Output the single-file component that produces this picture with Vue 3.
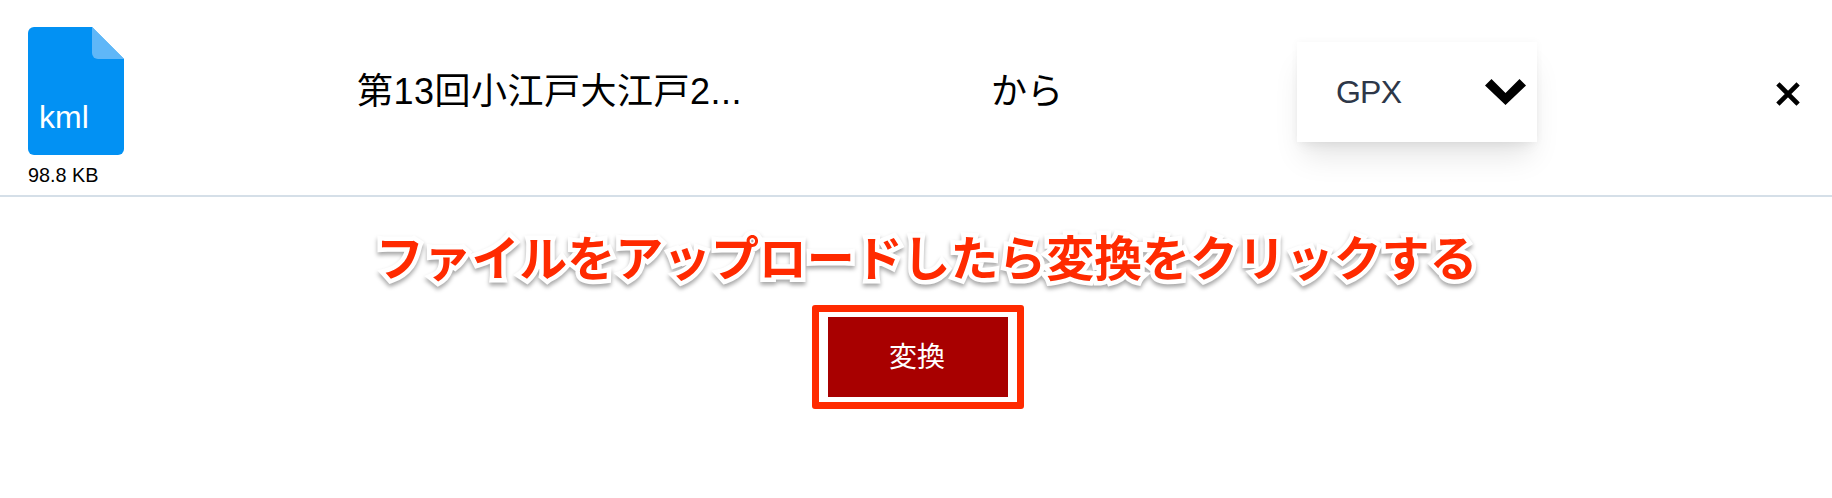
<script setup>
const fileName = '第13回小江戸大江戸2...'
</script>

<template>
  <div class="page">
    <div class="row">
      <div class="file">
        <svg class="file-icon" viewBox="0 0 96 128" width="96" height="128">
          <path d="M6 0H64L96 32V122a6 6 0 0 1-6 6H6a6 6 0 0 1-6-6V6a6 6 0 0 1 6-6Z" fill="#0291f3" />
          <path d="M64 0L96 32H70a6 6 0 0 1-6-6Z" fill="#5fb7f8" />
        </svg>
        <span class="ext">kml</span>
        <div class="size">98.8 KB</div>
      </div>
      <div class="name">{{ fileName }}</div>
      <div class="from">から</div>
      <div class="select">
        <span class="select-label">GPX</span>
        <svg class="chevron" viewBox="0 0 41 26" width="41" height="26">
          <path d="M0 6.5L6.5 0L20.5 14L34.5 0L41 6.5L20.5 26Z" fill="#000" />
        </svg>
      </div>
      <svg class="close" viewBox="0 0 24 24" width="24" height="24">
        <path d="M3.5 3.5L20.5 20.5M20.5 3.5L3.5 20.5" stroke="#000" stroke-width="4.6" fill="none" stroke-linecap="square" />
      </svg>
    </div>
    <div class="note">ファイルをアップロードしたら変換をクリックする</div>
    <div class="action">
      <div class="mark">
        <button class="convert" type="button">変換</button>
      </div>
    </div>
  </div>
</template>

<style scoped>
.page {
  width: 1832px;
  height: 498px;
  background: #fff;
  overflow: hidden;
  font-family: "Liberation Sans", "Noto Sans CJK JP", sans-serif;
  color: #000;
}
.row {
  box-sizing: border-box;
  height: 197px;
  border-bottom: 2px solid #d5dfe8;
  display: grid;
  grid-template-columns: 329px 634px 306px 240px 1fr;
  padding-left: 28px;
  padding-bottom: 14px;
  align-items: center;
}
.file {
  position: relative;
  align-self: start;
  padding-top: 27px;
}
.file-icon {
  display: block;
}
.ext {
  position: absolute;
  left: 11px;
  top: 99px;
  font-size: 32px;
  line-height: 36px;
  color: #fff;
}
.size {
  margin-top: 9px;
  font-size: 19.8px;
  line-height: 22px;
}
.name,
.from {
  font-size: 36px;
  line-height: 44px;
  white-space: nowrap;
  margin-top: -2px;
}
.name {
  letter-spacing: 0.5px;
}
.select {
  box-sizing: border-box;
  width: 240px;
  height: 100px;
  margin-top: -2px;
  background: #fff;
  box-shadow: 0 0 8px rgba(0, 0, 0, 0.04), 0 20px 30px -6px rgba(0, 0, 0, 0.1), 0 8px 12px -4px rgba(0, 0, 0, 0.05);
  display: flex;
  align-items: center;
  justify-content: space-between;
  padding: 0 11px 0 39px;
}
.select-label {
  font-size: 32px;
  letter-spacing: -0.8px;
  color: #2d3748;
}
.chevron {
  display: block;
}
.close {
  margin-left: 239px;
  margin-top: 2px;
}
.note {
  padding-left: 21px;
  margin-top: 32px;
  text-align: center;
  font-size: 48px;
  letter-spacing: -0.1px;
  line-height: 62px;
  font-weight: 700;
  color: #ff2a00;
  white-space: nowrap;
  -webkit-text-stroke: 9px #fff;
  paint-order: stroke fill;
  filter: drop-shadow(0 3px 2px rgba(0, 0, 0, 0.35));
}
.action {
  display: flex;
  justify-content: center;
  margin-top: 14px;
  padding-left: 4px;
}
.mark {
  box-sizing: border-box;
  width: 212px;
  height: 104px;
  border: 7px solid #ff2a00;
  border-radius: 3px;
  display: flex;
  align-items: center;
  justify-content: center;
}
.convert {
  width: 180px;
  height: 80px;
  border: 0;
  padding: 0 2px 4px 0;
  background: #a80000;
  color: #fff;
  font-family: inherit;
  font-size: 28px;
}
</style>
